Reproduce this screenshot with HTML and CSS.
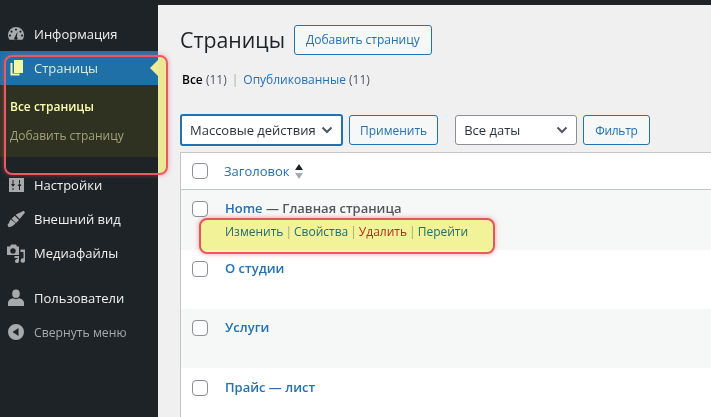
FILE: index.html
```
<!DOCTYPE html>
<html lang="ru">
<head>
<meta charset="utf-8">
<title>Страницы</title>
<link rel="stylesheet" href="styles.css">
</head>
<body>
<div class="adminbar"></div>
<div class="shell">
  <nav class="side">
    <a class="item first"><svg class="ic" viewBox="0 0 20 20"><path fill-rule="evenodd" d="M10 3a8 8 0 0 0-8 8c0 1.800.6 3.400 1.600 4.800h12.800A8 8 0 0 0 18 11a8 8 0 0 0-8-8zm0 1.500a1.100 1.100 0 1 1 0 2.200 1.100 1.100 0 0 1 0-2.200zM5.500 6.500a1.100 1.100 0 1 1 0 2.200 1.100 1.100 0 0 1 0-2.200zm9 0a1.100 1.100 0 1 1 0 2.200 1.100 1.100 0 0 1 0-2.200zM4 10.500a1.100 1.100 0 1 1 0 2.200 1.100 1.100 0 0 1 0-2.200zm12 0a1.100 1.100 0 1 1 0 2.200 1.100 1.100 0 0 1 0-2.200zM11.500 7.500l-.6 5.600a1.700 1.700 0 1 1-2 0z"/></svg><span>Информация</span></a>
    <a class="item current"><svg class="ic" viewBox="0 0 20 20"><path d="M8 2h9v13H8z"/><path d="M4.500 5h2v10.500h7v2h-9z"/></svg><span>Страницы</span></a>
    <div class="sub">
      <a class="sub-on">Все страницы</a>
      <a>Добавить страницу</a>
    </div>
    <a class="item settings"><svg class="ic" viewBox="0 0 20 20"><path fill-rule="evenodd" d="M3 3h15v14H3zM6.500 5v4H5l2 3 2-3H7.500V5zm0 8v2h1v-2zm6.500-8v3h1V5zm.5 3L11.500 11H13v4h1v-4h1.500z"/></svg><span>Настройки</span></a>
    <a class="item"><svg class="ic" viewBox="0 0 20 20"><path d="M19 3.500l-1.300-1.800-8.200 4.100 4.200 4.300zM8.600 6.700l-3 3 4.400 4.400 3-3zM4.900 10.400C3.200 11 3.900 13.800 1.500 15.500l1 2.800c3.500-.5 5.800-2 7-4.200z"/></svg><span>Внешний вид</span></a>
    <a class="item"><svg class="ic" viewBox="0 0 20 20"><path fill-rule="evenodd" d="M1 3.500h3L5 1.500h5l1 2h2v8.500H1zm6 1.700a2.700 2.700 0 1 0 0 5.400 2.700 2.700 0 0 0 0-5.400z"/><path d="M14.500 6.500H19v11a2.200 2.200 0 1 1-1.500-2V9h-3zM8.500 13H13v5a2 2 0 1 1-1.500-1.900V15h-3z"/></svg><span>Медиафайлы</span></a>
    <a class="item users"><svg class="ic" viewBox="0 0 20 20"><path d="M10 1.500a3.800 4.300 0 1 1 0 8.600 3.800 4.300 0 0 1 0-8.600zM2 18v-3.500c0-2.200 2.500-3.600 4.800-4.200 2 1.100 4.400 1.100 6.400 0 2.300.6 4.800 2 4.800 4.200V18z"/></svg><span>Пользователи</span></a>
    <a class="item collapse"><svg class="ic" viewBox="0 0 20 20"><path fill-rule="evenodd" d="M10 2a8 8 0 1 1 0 16 8 8 0 0 1 0-16zM12.500 6L6.500 10l6 4z"/></svg><span>Свернуть меню</span></a>
    <div class="mark mark-menu"></div>
  </nav>
  <main class="main">
    <div class="head">
      <h1>Страницы</h1>
      <a class="btn add">Добавить страницу</a>
    </div>
    <div class="views"><b>Все</b> <i>(11)</i><i class="sep">|</i><a>Опубликованные</a> <i>(11)</i></div>
    <div class="tools">
      <div class="sel bulk"><span>Массовые действия</span><svg class="chev" viewBox="0 0 12 8"><path d="M1.500 1.500L6 6l4.500-4.500"/></svg></div>
      <a class="btn apply">Применить</a>
      <div class="sel dates"><span>Все даты</span><svg class="chev" viewBox="0 0 12 8"><path d="M1.500 1.500L6 6l4.500-4.500"/></svg></div>
      <a class="btn filter">Фильтр</a>
    </div>
    <div class="table">
      <div class="row thead">
        <span class="cb"></span>
        <a class="th">Заголовок</a>
        <span class="sort"><i class="up"></i><i class="down"></i></span>
      </div>
      <div class="row alt r1">
        <span class="cb"></span>
        <div class="cell">
          <div class="title"><a>Home</a><em> — Главная страница</em></div>
          <div class="actions"><a>Изменить</a><i>|</i><a>Свойства</a><i>|</i><a class="del">Удалить</a><i>|</i><a>Перейти</a></div>
          <div class="mark mark-row"></div>
        </div>
      </div>
      <div class="row r2"><span class="cb"></span><div class="cell"><div class="title"><a>О студии</a></div></div></div>
      <div class="row alt r3"><span class="cb"></span><div class="cell"><div class="title"><a>Услуги</a></div></div></div>
      <div class="row r4"><span class="cb"></span><div class="cell"><div class="title"><a>Прайс — лист</a></div></div></div>
    </div>
  </main>
</div>
</body>
</html>
```
FILE: styles.css
```
* { box-sizing: border-box; }
html, body { margin: 0; height: 100%; overflow: hidden; }
body {
  background: #f0f0f1;
  font-family: "Open Sans", "Noto Sans", sans-serif;
  font-size: 13px;
  color: #3c434a;
  display: flex;
  flex-direction: column;
}
.adminbar { height: 5px; background: #1d2327; flex: none; }
.shell { display: flex; flex: 1; min-height: 0; }
.side {
  position: relative;
  width: 158px;
  flex: none;
  background: #1d2327;
  display: flex;
  flex-direction: column;
}
.item {
  display: flex;
  align-items: center;
  height: 34px;
  color: #f0f0f1;
  font-size: 13px;
}
.item .ic { width: 20px; height: 20px; margin: 0 8px 0 6px; fill: #a7aaad; flex: none; }
.item.first { margin-top: 12px; }
.item.current { background: #2070a8; color: #d8ecd8; position: relative; }
.item.current .ic { fill: #f8f6a2; }
.item.current::after {
  content: "";
  position: absolute;
  right: 0;
  top: 9px;
  border: 8px solid transparent;
  border-right-color: #efec98;
}
.sub {
  background: #2f3220;
  height: 72px;
  padding: 12px 0 0 10px;
  display: flex;
  flex-direction: column;
  gap: 10px;
  font-size: 12px;
  color: #a0a27c;
}
.sub a { line-height: 19px; }
.sub .sub-on { color: #fdfdb0; font-weight: 600; }
.item.settings { margin-top: 11px; }
.item.users { margin-top: 11px; }
.item.collapse { color: #a7aaad; font-size: 12.2px; }
.mark {
  position: absolute;
  border: 2px solid #ea5a62;
  border-radius: 8px;
  box-shadow: 0 0 5px rgba(232,80,91,.55);
  pointer-events: none;
}
.mark-menu {
  left: 4px;
  top: 50px;
  width: 164px;
  height: 120px;
  background: linear-gradient(90deg, transparent 152px, #ece996 152px);
  z-index: 2;
}
.mark-row {
  left: -26px;
  top: 20px;
  width: 296px;
  height: 36px;
  background: #fbfa9e;
  mix-blend-mode: multiply;
}
.main { flex: 1; min-width: 0; padding-left: 22px; overflow: hidden; }
.head { display: flex; align-items: center; height: 39px; margin-top: 15px; }
h1 {
  margin: 0 9px 0 0;
  font-size: 21.3px;
  font-weight: 400;
  color: #1d2327;
  line-height: 29px;
}
.btn {
  display: flex;
  align-items: center;
  height: 30px;
  padding: 0 10px;
  border: 1px solid #2271b1;
  border-radius: 3px;
  background: #f6f7f7;
  color: #2271b1;
  font-size: 12px;
}
.add { padding: 0 11px; }
.filter { padding: 0 11px; letter-spacing: -.3px; }
.views { margin-top: 11px; padding-left: 2px; height: 20px; line-height: 20px; font-size: 12px; color: #50575e; }
.views b { font-weight: 600; color: #000; }
.views i { font-style: normal; }
.views .sep { color: #a7aaad; margin: 0 5px; }
.views a { color: #2271b1; }
.tools { display: flex; align-items: center; margin-top: 24px; height: 32px; }
.sel {
  display: flex;
  align-items: center;
  justify-content: space-between;
  background: #fff;
  border: 1px solid #8c8f94;
  border-radius: 3px;
  height: 30px;
  color: #2c3338;
  padding: 0 8px;
  font-size: 13px;
}
.bulk { width: 163px; height: 32px; border: 2px solid #2271b1; margin-right: 6px; }
.apply { margin-right: 17px; }
.dates { width: 122px; margin-right: 6px; }
.chev { width: 12px; height: 8px; fill: none; stroke: #50575e; stroke-width: 2; }
.table { margin-top: 6px; border: 1px solid #c3c4c7; border-right: 0; border-bottom: 0; background: #fff; }
.row { display: flex; position: relative; padding-left: 11px; }
.thead { height: 37px; align-items: center; border-bottom: 1px solid #c3c4c7; }
.cb {
  width: 16px;
  height: 16px;
  border: 1px solid #8c8f94;
  border-radius: 4px;
  background: #fff;
  flex: none;
}
.th { color: #2271b1; margin-left: 16px; }
.sort { display: flex; flex-direction: column; gap: 3px; margin-left: 5px; }
.sort i { width: 0; height: 0; border: 4px solid transparent; }
.sort .up { border-top: 0; border-bottom: 6px solid #1d2327; }
.sort .down { border-bottom: 0; border-top: 6px solid #a7aaad; }
.row:not(.thead) { padding-top: 8px; }
.row:not(.thead) .cb { margin-top: 3px; }
.row.r4 { padding-top: 9px; }
.r1 { height: 60px; }
.r2, .r3, .r4 { height: 59px; }
.alt { background: #f6f7f7; }
.cell { margin-left: 17px; position: relative; }
.title { font-weight: 600; font-size: 13px; line-height: 20px; color: #50575e; }
.title a { color: #2271b1; }
.title em { font-style: normal; }
.actions { margin-top: 4px; line-height: 19px; font-size: 12px; white-space: nowrap; }
.actions a { color: #2271b1; }
.actions i { font-style: normal; color: #a7aaad; margin: 0 2px; }
.actions .del { color: #b32d2e; }
```
